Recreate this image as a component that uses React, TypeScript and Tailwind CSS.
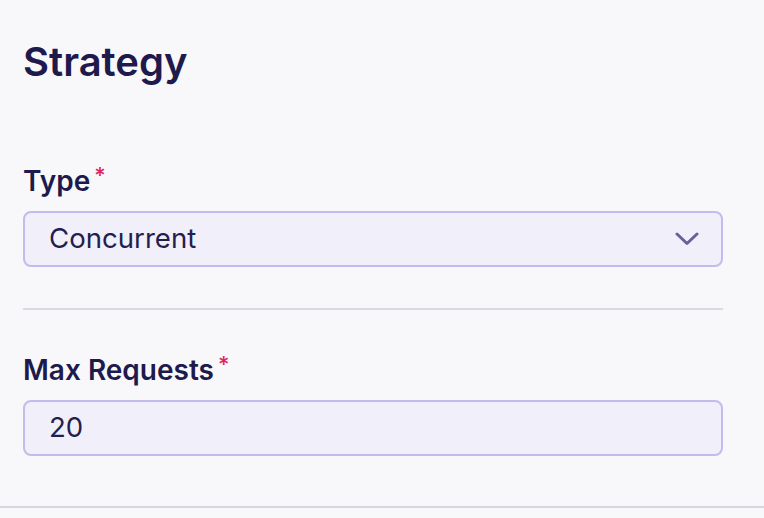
import React from "react";

export default function App() {
  return (
    <div className="w-[764px] h-[518px] bg-[#f8f8fb] flex flex-col" style={{ fontFamily: "Inter, 'Noto Sans', sans-serif" }}>
      <div className="pl-[23px] pr-[41px] flex-1 flex flex-col">
        <h2 className="mt-[38px] text-[40px] leading-[48px] font-semibold text-[#1e1a4c]">Strategy</h2>
        <div className="mt-[79px] flex items-start">
          <span className="text-[28px] leading-[32px] font-semibold text-[#1e1a4c]">Type</span>
          <span className="ml-[4px] mt-[-1px] text-[22px] leading-[22px] font-medium text-[#e0245e]">*</span>
        </div>
        <div className="mt-[14px] h-[56px] rounded-[8px] border-2 border-[#c5baec] bg-[#f1effa] flex items-center justify-between pl-[24px] pr-[22px]">
          <span className="text-[27.6px] text-[#231e4f]">Concurrent</span>
          <svg width="24" height="14" viewBox="0 0 24 14" fill="none">
            <path d="M2 2 L12 11.5 L22 2" stroke="#6a5f9c" strokeWidth="3" strokeLinecap="round" strokeLinejoin="round" />
          </svg>
        </div>
        <div className="mt-[41px] h-[2px] bg-[#dcdae1]" />
        <div className="mt-[44px] flex items-start">
          <span className="text-[28px] leading-[32px] font-semibold text-[#1e1a4c]">Max Requests</span>
          <span className="ml-[4px] mt-[-1px] text-[22px] leading-[22px] font-medium text-[#e0245e]">*</span>
        </div>
        <div className="mt-[14px] h-[56px] rounded-[8px] border-2 border-[#c5baec] bg-[#f1effa] flex items-center pl-[24px]">
          <span className="text-[27.6px] text-[#231e4f]">20</span>
        </div>
      </div>
      <div className="h-[2px] bg-[#d7d5dd] mb-[10px]" />
    </div>
  );
}
